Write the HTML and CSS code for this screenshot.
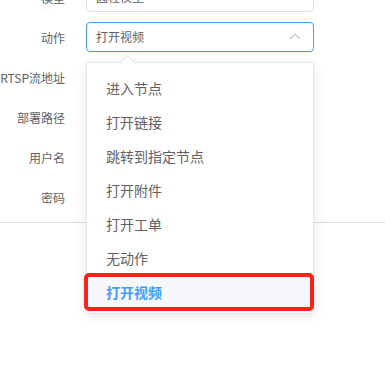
FILE: index.html
```
<!DOCTYPE html>
<html lang="zh-CN">
<head>
  <meta charset="UTF-8">
  <title>动作设置</title>
  <link rel="stylesheet" href="styles.css">
</head>
<body>
  <div class="panel">
    <form class="form">
      <div class="form-item">
        <label>模型</label>
        <div class="select"><span>圆柱模型</span></div>
      </div>
      <div class="form-item">
        <label>动作</label>
        <div class="select active">
          <span>打开视频</span>
          <svg class="arrow-icon" width="12" height="7" viewBox="0 0 12 7"><path d="M1 6 L6 1 L11 6" fill="none" stroke="#c0c4cc" stroke-width="1.2"/></svg>

          <!-- dropdown list -->
          <div class="dropdown">
            <div class="popper-arrow"></div>
            <ul>
              <li>进入节点</li>
              <li>打开链接</li>
              <li>跳转到指定节点</li>
              <li>打开附件</li>
              <li>打开工单</li>
              <li>无动作</li>
              <li class="selected">打开视频</li>
            </ul>
          </div>
        </div>
      </div>
      <div class="form-item">
        <label>RTSP流地址</label>
        <div class="select"></div>
      </div>
      <div class="form-item">
        <label>部署路径</label>
        <div class="select"></div>
      </div>
      <div class="form-item">
        <label>用户名</label>
        <div class="select"></div>
      </div>
      <div class="form-item">
        <label>密码</label>
        <div class="select"></div>
      </div>
    </form>
    <div class="divider"></div>
  </div>
</body>
</html>
```
FILE: styles.css
```
html, body {
  margin: 0;
  background: #fff;
}
body {
  font-family: "Noto Sans CJK SC", "Liberation Sans", sans-serif;
  color: #606266;
}
.panel {
  width: 385px;
  height: 352px;
  padding-top: 1px;
  margin-top: -19px;
}
.form-item {
  display: flex;
  align-items: center;
  height: 30px;
  margin-bottom: 10px;
}
.form-item label {
  width: 65px;
  text-align: right;
  font-size: 12px;
  white-space: nowrap;
  margin-right: 21px;
}
.select {
  position: relative;
  width: 228px;
  height: 30px;
  box-sizing: border-box;
  border: 1px solid #dcdfe6;
  border-radius: 4px;
  font-size: 12px;
  padding-left: 9px;
  line-height: 28px;
}
.select.active {
  border-color: #409eff;
}
.arrow-icon {
  position: absolute;
  right: 12px;
  top: 10px;
}
.dropdown {
  position: absolute;
  top: 39px;
  left: -1px;
  width: 228px;
  box-sizing: border-box;
  background: #fff;
  border: 1px solid #e4e7ed;
  border-radius: 4px;
  box-shadow: 0 2px 12px rgba(0, 0, 0, 0.1);
  z-index: 10;
}
.popper-arrow {
  position: absolute;
  top: -6px;
  left: 35px;
  width: 10px;
  height: 10px;
  background: #fff;
  border-left: 1px solid #e4e7ed;
  border-top: 1px solid #e4e7ed;
  transform: rotate(45deg);
}
.dropdown ul {
  list-style: none;
  margin: 0;
  padding: 8px 0 4px;
}
.dropdown li {
  position: relative;
  height: 34px;
  line-height: 34px;
  padding: 0 19px;
  font-size: 14px;
  color: #606266;
}
.dropdown li.selected {
  background: #f5f7fa;
  color: #409eff;
  font-weight: bold;
}
.dropdown li.selected::after {
  content: "";
  position: absolute;
  top: -2px;
  bottom: -2px;
  left: -3px;
  right: -1px;
  border: 4px solid #ff2016;
  border-radius: 5px;
}
.divider {
  height: 1px;
  background: #dcdfe6;
}
```
